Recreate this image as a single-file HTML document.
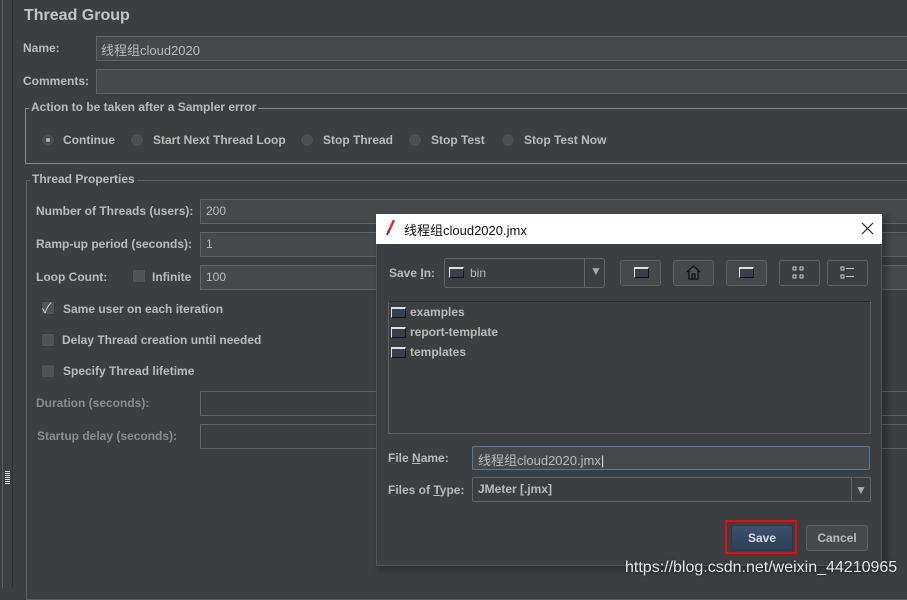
<!DOCTYPE html>
<html><head><meta charset="utf-8"><style>
*{margin:0;padding:0;box-sizing:border-box}
body{width:907px;height:588px;overflow:hidden;background:#3c3f41;font-family:"Liberation Sans","Noto Sans CJK SC",sans-serif;font-size:12px;color:#bbbbbb;position:relative}
.a{position:absolute;white-space:nowrap}
.b{font-weight:bold}
.f{position:absolute;background:#45494a;border:1px solid #646464}
.vl{position:absolute;top:0;bottom:0;width:1px;background:#5a5d5f}
.rad{position:absolute;width:14px;height:14px;border-radius:50%;background:#4b4f51;border:1px solid #3a3a3a}
.cb{position:absolute;width:14px;height:14px;background:#4f5355;border:1px solid #3a3a3a;border-radius:2px}
.grp{position:absolute;border:1px solid #8a8a8a}
.lg{position:absolute;background:#3c3f41;padding:0 2px;font-weight:bold;font-size:12px}
.btn{position:absolute;height:26px;border:1px solid #5e6163;border-radius:3px;background:#45494a}
.fold{position:absolute;width:15px;height:11px;background:#34404f;border:1px solid #e0e0e0;border-right-color:#111;border-bottom-color:#111;border-top-width:2px}
</style></head><body>
<div class="vl" style="left:2px"></div>
<div class="vl" style="left:12px;background:#2e3032"></div>
<div class="a b" style="left:24px;top:7px;font-size:16px;color:#c4c4c4">Thread Group</div>
<div class="a b" style="left:23px;top:41px">Name:</div>
<div class="f" style="left:96px;top:36px;width:820px;height:25px"></div>
<div class="a" style="left:101px;top:40px;font-size:13px">线程组cloud2020</div>
<div class="a b" style="left:23px;top:74px">Comments:</div>
<div class="f" style="left:96px;top:69px;width:820px;height:25px"></div>
<div class="grp" style="left:25px;top:108px;width:890px;height:56px"></div>
<div class="lg" style="left:29px;top:100px">Action to be taken after a Sampler error</div>
<div class="rad" style="left:41px;top:133px"><div style="position:absolute;left:4px;top:4px;width:4px;height:4px;border-radius:50%;background:#bbb"></div></div>
<div class="a b" style="left:63px;top:133px">Continue</div>
<div class="rad" style="left:130px;top:133px"></div><div class="a b" style="left:153px;top:133px">Start Next Thread Loop</div>
<div class="rad" style="left:300px;top:133px"></div><div class="a b" style="left:323px;top:133px">Stop Thread</div>
<div class="rad" style="left:408px;top:133px"></div><div class="a b" style="left:431px;top:133px">Stop Test</div>
<div class="rad" style="left:501px;top:133px"></div><div class="a b" style="left:524px;top:133px">Stop Test Now</div>
<div class="grp" style="left:26px;top:180px;width:890px;height:420px;border-color:#5c5f61"></div>
<div class="lg" style="left:30px;top:172px">Thread Properties</div>
<div class="a b" style="left:36px;top:204px">Number of Threads (users):</div>
<div class="f" style="left:200px;top:199px;width:720px;height:25px"></div><div class="a" style="left:206px;top:204px">200</div>
<div class="a b" style="left:36px;top:237px">Ramp-up period (seconds):</div>
<div class="f" style="left:200px;top:232px;width:720px;height:25px"></div><div class="a" style="left:206px;top:237px">1</div>
<div class="a b" style="left:36px;top:270px">Loop Count:</div>
<div class="cb" style="left:132px;top:269px"></div><div class="a b" style="left:152px;top:270px">Infinite</div>
<div class="f" style="left:200px;top:265px;width:720px;height:25px"></div><div class="a" style="left:206px;top:270px">100</div>
<div class="cb" style="left:41px;top:301px"></div><div class="a" style="left:42px;top:298px;font-size:14px;color:#ccc">✓</div>
<div class="a b" style="left:63px;top:302px">Same user on each iteration</div>
<div class="cb" style="left:41px;top:333px"></div><div class="a b" style="left:62px;top:333px">Delay Thread creation until needed</div>
<div class="cb" style="left:41px;top:364px"></div><div class="a b" style="left:63px;top:364px">Specify Thread lifetime</div>
<div class="a b" style="left:36px;top:396px;color:#8c8c8c">Duration (seconds):</div>
<div class="f" style="left:200px;top:391px;width:720px;height:25px;background:#3c3f41"></div>
<div class="a b" style="left:37px;top:429px;color:#8c8c8c">Startup delay (seconds):</div>
<div class="f" style="left:200px;top:424px;width:720px;height:25px;background:#3c3f41"></div>
<div class="a" style="left:5px;top:470px;width:5px;height:14px;background:repeating-linear-gradient(0deg,#ddd 0 1px,#3c3f41 1px 2px)"></div>

<!-- dialog -->
<div class="a" style="left:378px;top:216px;width:510px;height:355px;background:rgba(0,0,0,.25);filter:blur(3px)"></div>
<div class="a" style="left:376px;top:214px;width:506px;height:352px;background:#3c3f41;border:1px solid #555"></div>
<div class="a" style="left:376px;top:214px;width:506px;height:30px;background:#fff"></div>
<svg class="a" style="left:385px;top:219px" width="12" height="18"><path d="M9 1 L3 14" stroke="#d8332a" stroke-width="2.5"/><path d="M4 11 L2 16" stroke="#7a2a8a" stroke-width="2"/></svg>
<div class="a" style="left:404px;top:220px;font-size:13px;color:#111">线程组cloud2020.jmx</div>
<svg class="a" style="left:861px;top:222px" width="13" height="13"><path d="M1 1L12 12M12 1L1 12" stroke="#222" stroke-width="1.2"/></svg>
<div class="a b" style="left:389px;top:266px">Save <u>I</u>n:</div>
<div class="a" style="left:444px;top:258px;width:161px;height:30px;border:1px solid #646464;border-radius:3px;background:#3c3f41"></div>
<div class="a" style="left:584px;top:259px;width:1px;height:28px;background:#646464"></div>
<div class="a" style="left:590px;top:264px;color:#aaa;font-size:12px">▼</div>
<div class="fold" style="left:449px;top:267px"></div>
<div class="a" style="left:470px;top:266px;font-size:12px">bin</div>
<div class="btn" style="left:620px;top:260px;width:41px"></div><div class="fold" style="left:634px;top:267px"></div>
<div class="btn" style="left:673px;top:260px;width:41px"></div><svg class="a" style="left:686px;top:264px" width="15" height="16"><path d="M1 8L7.5 2L14 8M3 7V15H12V7M6 15V10H9V15" stroke="#111" fill="#555" stroke-width="1.3"/></svg>
<div class="btn" style="left:726px;top:260px;width:41px"></div><div class="fold" style="left:739px;top:267px"></div>
<div class="btn" style="left:779px;top:260px;width:41px;background:#3c3f41"></div><svg class="a" style="left:792px;top:266px" width="16" height="14"><g fill="none" stroke="#ccc"><rect x="1" y="1" width="3" height="3"/><rect x="8" y="1" width="3" height="3"/><rect x="1" y="9" width="3" height="3"/><rect x="8" y="9" width="3" height="3"/></g></svg>
<div class="btn" style="left:827px;top:260px;width:41px;background:#3c3f41"></div><svg class="a" style="left:840px;top:266px" width="16" height="14"><g fill="none" stroke="#ccc"><rect x="1" y="1" width="3" height="3"/><rect x="1" y="9" width="3" height="3"/><path d="M6 2.5H14M6 10.5H14"/></g></svg>
<div class="a" style="left:388px;top:301px;width:483px;height:133px;border:1px solid #5c5f61;border-top-color:#2b2b2b;background:#3c3f41"></div>
<div class="fold" style="left:391px;top:307px"></div><div class="a b" style="left:410px;top:305px">examples</div>
<div class="fold" style="left:391px;top:327px"></div><div class="a b" style="left:410px;top:325px">report-template</div>
<div class="fold" style="left:391px;top:347px"></div><div class="a b" style="left:410px;top:345px">templates</div>
<div class="a b" style="left:388px;top:451px">File <u>N</u>ame:</div>
<div class="a" style="left:472px;top:446px;width:398px;height:24px;border:1px solid #4a7ab0;border-radius:2px;background:#45494a"></div>
<div class="a" style="left:478px;top:450px;font-size:13px">线程组cloud2020.jmx<span style="color:#ddd">|</span></div>
<div class="a b" style="left:388px;top:483px">Files of <u>T</u>ype:</div>
<div class="a" style="left:472px;top:477px;width:399px;height:25px;border:1px solid #646464;border-radius:2px;background:#3c3f41"></div>
<div class="a" style="left:851px;top:478px;width:1px;height:23px;background:#646464"></div>
<div class="a" style="left:855px;top:483px;color:#aaa">▼</div>
<div class="a b" style="left:478px;top:482px">JMeter [.jmx]</div>
<div class="a" style="left:725px;top:520px;width:72px;height:34px;border:2px solid #e0100f"></div>
<div class="a" style="left:731px;top:525px;width:62px;height:26px;border:1px solid #2a3a52;border-radius:3px;background:linear-gradient(#3a5170,#2d3f58)"></div>
<div class="a b" style="left:731px;top:531px;width:62px;text-align:center;color:#ddd">Save</div>
<div class="btn" style="left:806px;top:525px;width:62px;background:#45494a"></div>
<div class="a b" style="left:806px;top:531px;width:62px;text-align:center">Cancel</div>
<div class="a" style="left:625px;top:559px;font-size:16px;color:#e8e8e8;text-shadow:0 0 2px #222">https://blog.csdn.net/weixin_44210965</div>
</body></html>
